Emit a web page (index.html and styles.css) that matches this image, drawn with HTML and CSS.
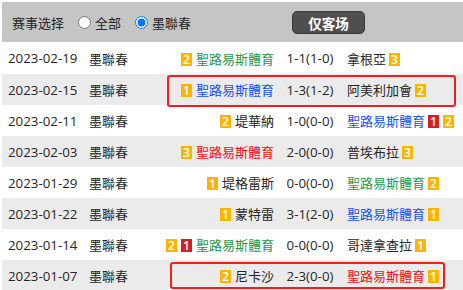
FILE: index.html
```html
<!DOCTYPE html>
<html>
<head>
<meta charset="utf-8">
<link rel="stylesheet" href="styles.css">
</head>
<body>
<div class="panel">
  <div class="head">
    <span class="label">赛事选择</span>
    <label class="opt"><input type="radio" name="lg"><span>全部</span></label>
    <label class="opt"><input type="radio" name="lg" checked><span>墨聯春</span></label>
    <button class="btn">仅客场</button>
  </div>
  <div class="rows">
    <div class="row">
      <span class="date">2023-02-19</span><span class="lg">墨聯春</span>
      <span class="home"><i class="b y">2</i><span class="t green">聖路易斯體育</span></span>
      <span class="score">1-1(1-0)</span>
      <span class="away"><span class="t">拿根亞</span><i class="b y">3</i></span>
    </div>
    <div class="row alt">
      <span class="date">2023-02-15</span><span class="lg">墨聯春</span>
      <span class="home"><i class="b y">1</i><span class="t blue">聖路易斯體育</span></span>
      <span class="score">1-3(1-2)</span>
      <span class="away"><span class="t">阿美利加會</span><i class="b y">2</i></span>
      <span class="mark m1"></span>
    </div>
    <div class="row">
      <span class="date">2023-02-11</span><span class="lg">墨聯春</span>
      <span class="home"><i class="b y">2</i><span class="t">堤華納</span></span>
      <span class="score">1-0(0-0)</span>
      <span class="away"><span class="t blue">聖路易斯體育</span><i class="b r">1</i><i class="b y">2</i></span>
    </div>
    <div class="row alt">
      <span class="date">2023-02-03</span><span class="lg">墨聯春</span>
      <span class="home"><i class="b y">3</i><span class="t red">聖路易斯體育</span></span>
      <span class="score">2-0(0-0)</span>
      <span class="away"><span class="t">普埃布拉</span><i class="b y">3</i></span>
    </div>
    <div class="row">
      <span class="date">2023-01-29</span><span class="lg">墨聯春</span>
      <span class="home"><i class="b y">1</i><span class="t">堤格雷斯</span></span>
      <span class="score">0-0(0-0)</span>
      <span class="away"><span class="t green">聖路易斯體育</span><i class="b y">2</i></span>
    </div>
    <div class="row alt">
      <span class="date">2023-01-22</span><span class="lg">墨聯春</span>
      <span class="home"><i class="b y">1</i><span class="t">蒙特雷</span></span>
      <span class="score">3-1(2-0)</span>
      <span class="away"><span class="t blue">聖路易斯體育</span><i class="b y">1</i></span>
    </div>
    <div class="row">
      <span class="date">2023-01-14</span><span class="lg">墨聯春</span>
      <span class="home"><i class="b y">2</i><i class="b r">1</i><span class="t green">聖路易斯體育</span></span>
      <span class="score">0-0(0-0)</span>
      <span class="away"><span class="t">哥達拿查拉</span><i class="b y">1</i></span>
    </div>
    <div class="row alt">
      <span class="date">2023-01-07</span><span class="lg">墨聯春</span>
      <span class="home"><i class="b y">2</i><span class="t">尼卡沙</span></span>
      <span class="score">2-3(0-0)</span>
      <span class="away"><span class="t red">聖路易斯體育</span><i class="b y">1</i></span>
      <span class="mark m2"></span>
    </div>
  </div>
</div>
</body>
</html>
```
FILE: styles.css
```css
html, body {
  margin: 0;
  padding: 0;
  background: #fff;
  overflow: hidden;
}
body {
  padding: 2px 0 0 2px;
  font-family: "Open Sans", "Noto Sans CJK SC", sans-serif;
  font-size: 13px;
  color: #262626;
}
.panel {
  width: 461px;
}
.head {
  height: 40px;
  background: #c5c5c5;
  display: flex;
  align-items: center;
  padding-left: 10px;
  box-sizing: border-box;
}
.label {
  margin-right: 14px;
}
.opt {
  display: flex;
  align-items: center;
}
.opt input {
  margin: 0 4px 0 0;
  width: 13px;
  height: 13px;
}
.opt + .opt {
  margin-left: 14px;
}
.btn {
  margin-left: 101px;
  width: 73px;
  height: 23px;
  margin-top: 1px;
  background: #4f4f4f;
  border: 1px solid #3a3a3a;
  border-radius: 5px;
  color: #fff;
  font-family: "Noto Sans CJK SC", sans-serif;
  font-weight: bold;
  font-size: 13.5px;
  padding: 0;
  line-height: 20px;
}
.row {
  position: relative;
  height: 31px;
  display: grid;
  grid-template-columns: 81px 50px 135px 72px 1fr;
  align-items: center;
  padding-left: 6px;
  white-space: nowrap;
}
.row:first-child {
  height: 32px;
}
.row.alt {
  background: #ebebeb;
}
.date, .score {
  font-size: 13.3px;
}
.home {
  display: flex;
  justify-content: flex-end;
  align-items: center;
  gap: 4px;
}
.score {
  text-align: center;
}
.away {
  display: flex;
  align-items: center;
  gap: 3px;
  padding-left: 1px;
}
.away .b + .b {
  margin-left: 1px;
}
.b {
  display: inline-block;
  width: 11px;
  height: 13px;
  line-height: 13px;
  font-style: normal;
  font-size: 12px;
  font-weight: 600;
  color: #fff;
  text-align: center;
  margin-top: 2px;
}
.b.y { background: #fbb500; }
.b.r { background: #d81e1e; }
.green { color: #23994a; }
.blue { color: #1a4ff2; }
.red { color: #f70d0d; }
.mark {
  position: absolute;
  border: 2px solid #f21d1d;
  border-radius: 3px;
  box-sizing: border-box;
}
.m1 {
  left: 165px;
  top: 1px;
  width: 289px;
  height: 32px;
}
.m2 {
  left: 168px;
  top: 2px;
  width: 275px;
  height: 27px;
}
```
